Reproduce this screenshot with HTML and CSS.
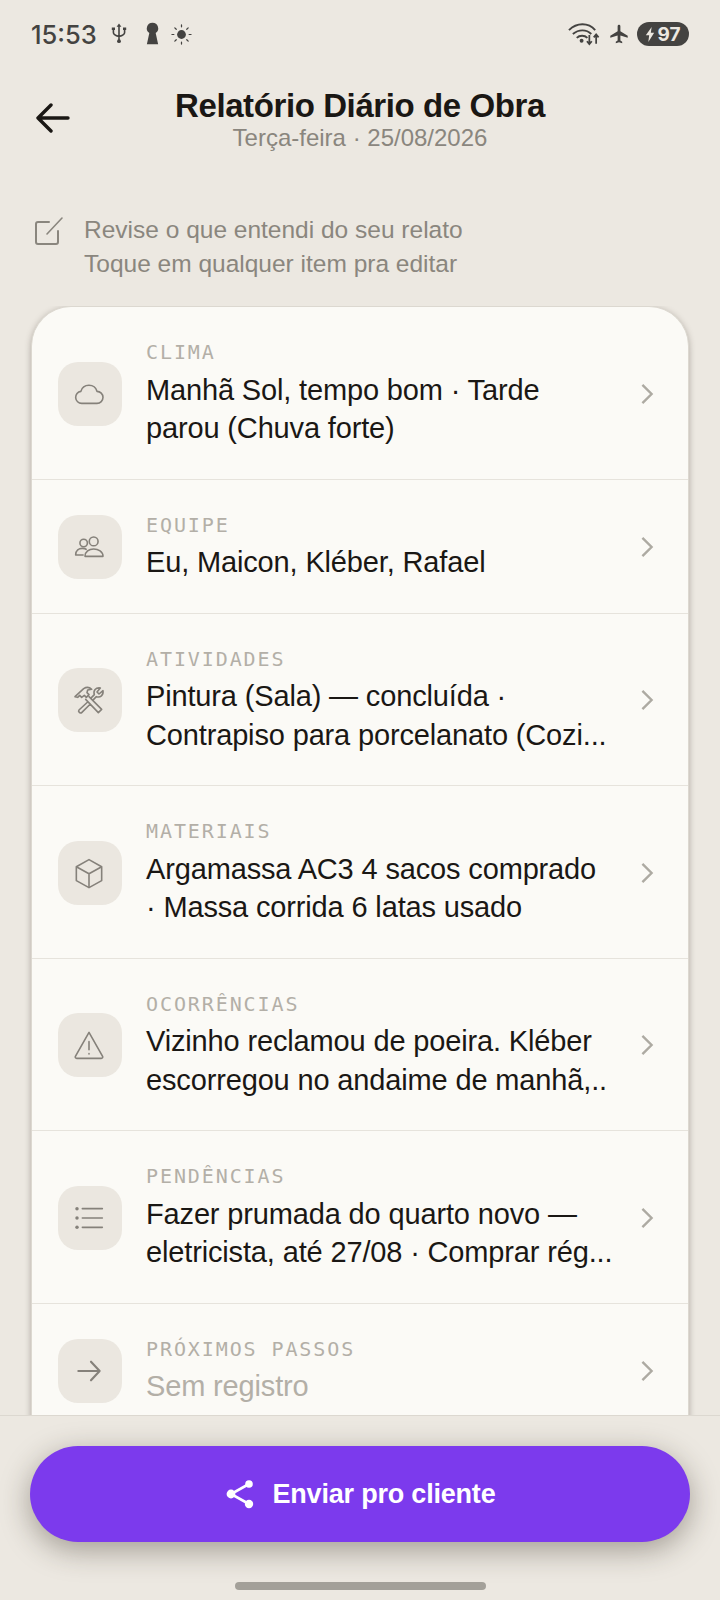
FILE: index.html
```html
<!DOCTYPE html>
<html lang="pt-BR">
<head>
    <meta charset="UTF-8">
    <meta name="viewport" content="width=device-width, initial-scale=1.0">
    <title>Relatório Diário de Obra</title>
    <link rel="stylesheet" href="styles.css">
</head>
<body>
    <div class="screen">
        <div class="status-bar">
            <div class="status-left">
                <span class="clock">15:53</span>
                <svg class="status-icon usb" viewBox="0 0 20 26" width="16" height="24" fill="none" stroke="#444341" stroke-width="2"><path d="M10 3v20M3 7v4c0 3 3 4 7 5 4-1 7-2 7-5V7"/><circle cx="10" cy="22" r="2.400" fill="#444341" stroke="none"/><path d="M10 0l3 4H7zM1 5h4v3H1zM15 5h4v3h-4z" fill="#444341" stroke="none"/></svg>
                <svg class="status-icon keyhole" viewBox="0 0 16 24" width="15" height="24" fill="#444341"><path d="M8 0a6 6 0 0 1 3.400 11L14 23H2L4.600 11A6 6 0 0 1 8 0z"/></svg>
                <svg class="status-icon" viewBox="0 0 22 22" width="21" height="21" fill="#444341" stroke="#444341" stroke-width="1.300" stroke-linecap="round"><circle cx="11" cy="11" r="4.600" stroke="none"/><path d="M11 1v2M11 19v2M1 11h2M19 11h2M4 4l1.500 1.500M16.500 16.500L18 18M4 18l1.500-1.500M16.500 5.500L18 4"/></svg>
            </div>
            <div class="status-right">
                <svg class="status-icon" viewBox="0 0 34 24" width="33" height="24" fill="none" stroke="#444341" stroke-width="2"><path d="M1 8c8-8 20-8 27 0M5 12c6-5 14-5 19 0M9 16c3-3 8-3 11 0"/><circle cx="14" cy="19" r="2" fill="#444341" stroke="none"/><path d="M22 13v9M19.500 19.500L22 22.500l2.500-3M29 22v-9M26.500 15.500L29 12.500l2.500 3" stroke-width="1.800"/></svg>
                <svg class="status-icon" viewBox="0 0 24 24" width="22" height="22" fill="#444341"><path d="M21 16v-2l-8-5V3.500a1.500 1.500 0 0 0-3 0V9l-8 5v2l8-2.500V19l-2 1.500V22l3.500-1 3.500 1v-1.500L13 19v-5.500z" transform="translate(0.500 0)"/></svg>
                <span class="battery">
                    <svg viewBox="0 0 12 18" width="10" height="15" fill="#ece8e1"><path d="M8 0L1 10h4l-1 8 7-11H7z"/></svg>
                    <span>97</span>
                </span>
            </div>
        </div>

        <div class="header">
            <svg class="back" viewBox="0 0 34 30" width="34" height="30" fill="none" stroke="#1a1714" stroke-width="3.400" stroke-linecap="round" stroke-linejoin="round"><path d="M2 15h30M15 2L2 15l13 13"/></svg>
            <h1 class="title">Relatório Diário de Obra</h1>
            <div class="date">Terça-feira · 25/08/2026</div>
        </div>

        <div class="hint">
            <svg class="hint-icon" viewBox="0 0 30 30" width="30" height="30" fill="none" stroke="#8a867e" stroke-width="2" stroke-linecap="round" stroke-linejoin="round"><path d="M15 6H4a2 2 0 0 0-2 2v18a2 2 0 0 0 2 2h18a2 2 0 0 0 2-2V15"/><path d="M13 18L28 2" stroke-width="1.600"/></svg>
            <p class="hint-text">Revise o que entendi do seu relato<br>Toque em qualquer item pra editar</p>
        </div>

        <div class="list-area">
            <div class="card">
                <div class="row">
                    <div class="row-icon">
                        <svg viewBox="0 0 24 24" fill="none" stroke="currentColor" stroke-width="1.200" stroke-linejoin="round"><path d="M6.500 19a4.500 4.500 0 0 1-.6-8.960A6.300 6.300 0 0 1 18 10a4.500 4.500 0 0 1 0 9z"/></svg>
                    </div>
                    <div class="row-body">
                        <div class="row-label">CLIMA</div>
                        <div class="row-value">Manhã Sol, tempo bom · Tarde<br>parou (Chuva forte)</div>
                    </div>
                    <svg class="chevron" viewBox="0 0 14 24"><path d="M2 2l10 10L2 22"/></svg>
                </div>
                <div class="row">
                    <div class="row-icon">
                        <svg viewBox="0 0 24 24" fill="none" stroke="currentColor" stroke-width="1.200" stroke-linejoin="round"><circle cx="8" cy="9" r="2.800"/><circle cx="15.500" cy="7.800" r="3.300"/><path d="M8 18H2c0-3.500 2.500-5 5-5 1.500 0 2.500.4 3.300 1M9 19c0-3.500 3-5.500 6.500-5.500S22.500 15.500 22.500 19z"/></svg>
                    </div>
                    <div class="row-body">
                        <div class="row-label">EQUIPE</div>
                        <div class="row-value">Eu, Maicon, Kléber, Rafael</div>
                    </div>
                    <svg class="chevron" viewBox="0 0 14 24"><path d="M2 2l10 10L2 22"/></svg>
                </div>
                <div class="row">
                    <div class="row-icon">
                        <svg viewBox="0 0 24 24" fill="none" stroke="currentColor" stroke-width="1.200" stroke-linejoin="round" stroke-linecap="round"><path d="M1.500 9.500L8 3.500c2-1.300 4.500-1 6 .5l-3 .5-.5 2 1.500 1.500-2 2-1.500-1.500-2 1.500-1.500-1.500-1.500 1.500z"/><path d="M9.500 11.500L19 21.500l2.500-2.500-9.500-9.500M11 13.500l-6.500 6c-1 1 1 3 2 2l6.500-6.500M14 10l2-2c-1-3 1-5.500 4.500-5l-2.500 3 1.500 1.500 3-2.500c.5 3.500-2 5.500-5 4.500l-2 2"/></svg>
                    </div>
                    <div class="row-body">
                        <div class="row-label">ATIVIDADES</div>
                        <div class="row-value">Pintura (Sala) — concluída ·<br>Contrapiso para porcelanato (Cozi...</div>
                    </div>
                    <svg class="chevron" viewBox="0 0 14 24"><path d="M2 2l10 10L2 22"/></svg>
                </div>
                <div class="row">
                    <div class="row-icon">
                        <svg viewBox="0 0 24 24" fill="none" stroke="currentColor" stroke-width="1.200" stroke-linejoin="round"><path d="M12 2l9.500 5.300v10.400L12 23l-9.500-5.300V7.300z"/><path d="M2.500 7.300L12 12.600l9.500-5.300M12 12.600V23"/></svg>
                    </div>
                    <div class="row-body">
                        <div class="row-label">MATERIAIS</div>
                        <div class="row-value">Argamassa AC3 4 sacos comprado<br>· Massa corrida 6 latas usado</div>
                    </div>
                    <svg class="chevron" viewBox="0 0 14 24"><path d="M2 2l10 10L2 22"/></svg>
                </div>
                <div class="row">
                    <div class="row-icon">
                        <svg viewBox="0 0 24 24" fill="none" stroke="currentColor" stroke-width="1.200" stroke-linejoin="round" stroke-linecap="round"><path d="M12 2.500L1.800 20.500c-.3.700 0 1.500 1 1.500h18.400c1 0 1.300-.8 1-1.500z"/><path d="M12 9.500v6M12 18.500v.2"/></svg>
                    </div>
                    <div class="row-body">
                        <div class="row-label">OCORRÊNCIAS</div>
                        <div class="row-value">Vizinho reclamou de poeira. Kléber<br>escorregou no andaime de manhã,..</div>
                    </div>
                    <svg class="chevron" viewBox="0 0 14 24"><path d="M2 2l10 10L2 22"/></svg>
                </div>
                <div class="row">
                    <div class="row-icon">
                        <svg viewBox="0 0 24 24" fill="none" stroke="currentColor" stroke-width="1.200" stroke-linecap="round"><path d="M7 5h15M7 12h15M7 19h15"/><circle cx="3" cy="5" r="1.300" fill="currentColor" stroke="none"/><circle cx="3" cy="12" r="1.300" fill="currentColor" stroke="none"/><circle cx="3" cy="19" r="1.300" fill="currentColor" stroke="none"/></svg>
                    </div>
                    <div class="row-body">
                        <div class="row-label">PENDÊNCIAS</div>
                        <div class="row-value">Fazer prumada do quarto novo —<br>eletricista, até 27/08 · Comprar rég...</div>
                    </div>
                    <svg class="chevron" viewBox="0 0 14 24"><path d="M2 2l10 10L2 22"/></svg>
                </div>
                <div class="row row-empty">
                    <div class="row-icon">
                        <svg viewBox="0 0 24 24" fill="none" stroke="currentColor" stroke-width="1.600" stroke-linecap="round" stroke-linejoin="round"><path d="M4 12h16M13.500 5l6.500 7-6.500 7"/></svg>
                    </div>
                    <div class="row-body">
                        <div class="row-label">PRÓXIMOS PASSOS</div>
                        <div class="row-value">Sem registro</div>
                    </div>
                    <svg class="chevron" viewBox="0 0 14 24"><path d="M2 2l10 10L2 22"/></svg>
                </div>
            </div>
        </div>

        <div class="footer">
            <button class="send">
                <svg viewBox="0 0 30 32" width="30" height="32" fill="#fff" stroke="#fff" stroke-width="2.600"><path d="M24 6L6 16l18 10" fill="none"/><circle cx="24" cy="6" r="3.800" stroke="none"/><circle cx="6" cy="16" r="4.400" stroke="none"/><circle cx="24" cy="26" r="4.200" stroke="none"/></svg>
                <span>Enviar pro cliente</span>
            </button>
            <div class="home-bar"></div>
        </div>
    </div>
</body>
</html>
```

FILE: styles.css
```css
* {
    box-sizing: border-box;
}
html, body {
    margin: 0;
    padding: 0;
}
body {
    font-family: "Liberation Sans", Arial, sans-serif;
    background-color: #ece8e1;
    color: #1a1714;
}
.screen {
    width: 720px;
    height: 1600px;
    display: flex;
    flex-direction: column;
    overflow: hidden;
}

/* status bar */
.status-bar {
    height: 68px;
    padding: 0 31px;
    display: flex;
    align-items: center;
    justify-content: space-between;
    color: #444341;
}
.status-left, .status-right {
    display: flex;
    align-items: center;
}
.clock {
    font-family: Inter, sans-serif;
    font-size: 25.500px;
    font-weight: 500;
    margin-right: 14px;
}
.status-left .usb {
    margin-right: 18px;
}
.status-left .keyhole {
    margin-right: 11px;
}
.status-right .status-icon {
    margin-right: 7px;
}
.battery {
    height: 24px;
    width: 52px;
    border-radius: 12px;
    background-color: #444341;
    color: #ece8e1;
    display: flex;
    align-items: center;
    justify-content: center;
    gap: 2px;
    font-family: Inter, sans-serif;
    font-size: 19px;
    font-weight: 700;
}

/* header */
.header {
    position: relative;
    height: 102px;
    padding-top: 20px;
    text-align: center;
}
.back {
    position: absolute;
    left: 36px;
    top: 35px;
}
.title {
    margin: 0;
    font-size: 33px;
    line-height: 36px;
    font-weight: 700;
    letter-spacing: -0.400px;
    color: #1a1714;
}
.date {
    font-size: 24px;
    line-height: 28px;
    color: #8a867e;
}

/* hint */
.hint {
    display: flex;
    padding: 43px 34px 0;
    gap: 20px;
    height: 136px;
}
.hint-icon {
    margin-top: 3px;
}
.hint-text {
    margin: 0;
    font-size: 24.500px;
    line-height: 34px;
    color: #8a867e;
}

/* list */
.list-area {
    flex: 1;
    min-height: 0;
    padding: 0 31px;
    overflow: hidden;
}
.card {
    background-color: #fbfaf6;
    border-radius: 40px 40px 0 0;
    border: 1px solid #dcd8d0;
    border-bottom: none;
    box-shadow: 0 2px 6px rgba(60, 50, 40, 0.35);
}
.row {
    display: flex;
    align-items: center;
    padding: 33px 34px 31px 26px;
    border-bottom: 1px solid #e6e3dc;
}
.row-icon {
    width: 64px;
    height: 64px;
    flex-shrink: 0;
    border-radius: 20px;
    background-color: #ebe7e0;
    color: #85817a;
    display: flex;
    align-items: center;
    justify-content: center;
}
.row-icon svg {
    width: 32px;
    height: 32px;
    margin-right: 2px;
}
.row-body {
    flex: 1;
    min-width: 0;
    padding-left: 24px;
}
.row-label {
    font-family: "DejaVu Sans Mono", monospace;
    font-size: 20px;
    line-height: 25px;
    letter-spacing: 1.900px;
    color: #b3afa7;
    margin-bottom: 5.500px;
}
.row-value {
    font-size: 29px;
    line-height: 38.500px;
    letter-spacing: -0.150px;
    white-space: nowrap;
    color: #1a1714;
}
.row-empty .row-value {
    color: #b3afa7;
}
.chevron {
    width: 14px;
    height: 22px;
    flex-shrink: 0;
    fill: none;
    stroke: #adaaa2;
    stroke-width: 2.600;
}

/* footer */
.footer {
    height: 185px;
    flex-shrink: 0;
    border-top: 1px solid #dcd8d0;
    background-color: #ece8e1;
    padding: 30px 30px 0;
    display: flex;
    flex-direction: column;
    align-items: center;
}
.send {
    width: 660px;
    height: 96px;
    flex-shrink: 0;
    border: none;
    border-radius: 48px;
    background-color: #7c3aed;
    color: #fff;
    display: flex;
    align-items: center;
    justify-content: center;
    gap: 18px;
    font-family: "Liberation Sans", Arial, sans-serif;
    font-size: 27px;
    font-weight: 700;
    letter-spacing: -0.200px;
    box-shadow: 0 8px 30px rgba(50, 40, 30, 0.4);
}
.home-bar {
    width: 251px;
    height: 8px;
    margin-top: 40px;
    border-radius: 4px;
    background-color: #a3a099;
}
```
